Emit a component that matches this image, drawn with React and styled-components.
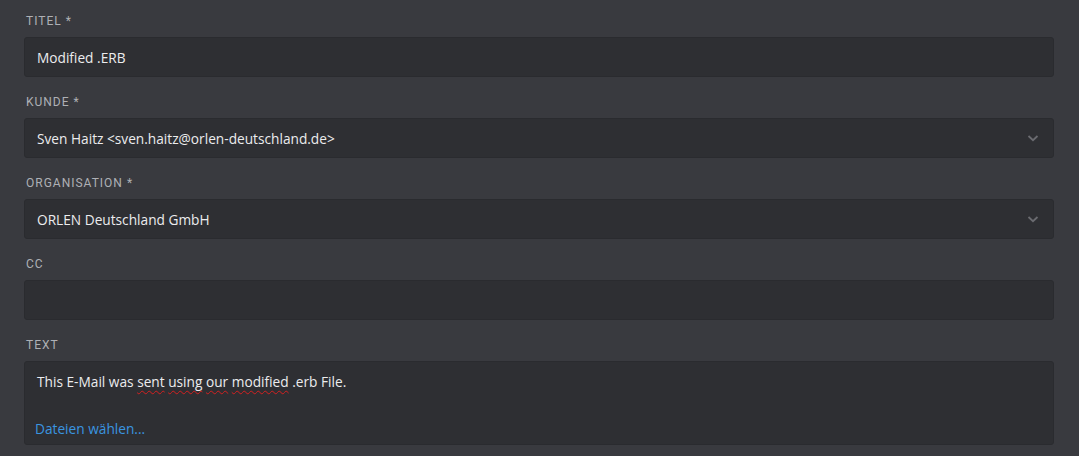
import React from "react";
import styled, { createGlobalStyle } from "styled-components";

const Global = createGlobalStyle`
  html, body { margin: 0; padding: 0; background: #393a3f; }
  body { font-family: Roboto, "Noto Sans", sans-serif; }
`;

const Page = styled.div`
  width: 1079px;
  height: 456px;
  box-sizing: border-box;
  padding: 13px 25px 0 24px;
  display: flex;
  flex-direction: column;
  gap: 17px;
  background: #393a3f;
  overflow: hidden;
`;

const Field = styled.div`
  display: flex;
  flex-direction: column;
`;

const Label = styled.div`
  font-family: Roboto, sans-serif;
  font-size: 12px;
  line-height: 16px;
  letter-spacing: 1px;
  text-transform: uppercase;
  color: #aeb0b5;
  padding-left: 2px;
  height: 24px;
`;

const Control = styled.div`
  position: relative;
  box-sizing: border-box;
  height: ${(p) => p.$h || 40}px;
  background: #2e2f33;
  border: 1px solid #2a2b2f;
  border-radius: 3px;
  color: #ececee;
  font-family: "Open Sans", sans-serif;
  font-size: 13.7px;
  font-weight: 500;
  display: flex;
  flex-direction: column;
  justify-content: ${(p) => (p.$area ? "flex-start" : "center")};
  padding: ${(p) => (p.$area ? "10px 12px 0 12px" : "0 12px")};
`;

const Chevron = styled.svg`
  position: absolute;
  right: 14px;
  top: 50%;
  margin-top: -5px;
  width: 12px;
  height: 10px;
`;

const Wavy = styled.span`
  text-decoration: underline wavy #d32020;
  text-decoration-thickness: 1px;
  text-underline-offset: 3px;
`;

const Link = styled.div`
  color: #3a95e0;
  margin-top: 28px;
  margin-left: -2px;
`;

const ChevronIcon = () => (
  <Chevron viewBox="0 0 12 10">
    <path d="M1.5 3 L6 7.2 L10.5 3" fill="none" stroke="#6a6b70" strokeWidth="1.8" />
  </Chevron>
);

export default function App() {
  return (
    <>
      <Global />
      <Page>
        <Field>
          <Label>Titel *</Label>
          <Control>Modified .ERB</Control>
        </Field>
        <Field>
          <Label>Kunde *</Label>
          <Control>
            Sven Haitz &lt;sven.haitz@orlen-deutschland.de&gt;
            <ChevronIcon />
          </Control>
        </Field>
        <Field>
          <Label>Organisation *</Label>
          <Control>
            ORLEN Deutschland GmbH
            <ChevronIcon />
          </Control>
        </Field>
        <Field>
          <Label>CC</Label>
          <Control />
        </Field>
        <Field>
          <Label>Text</Label>
          <Control $area $h={84}>
            <div>
              This E-Mail was <Wavy>sent</Wavy> <Wavy>using</Wavy> <Wavy>our</Wavy>{" "}
              <Wavy>modified</Wavy> .erb File.
            </div>
            <Link>Dateien wählen...</Link>
          </Control>
        </Field>
      </Page>
    </>
  );
}
